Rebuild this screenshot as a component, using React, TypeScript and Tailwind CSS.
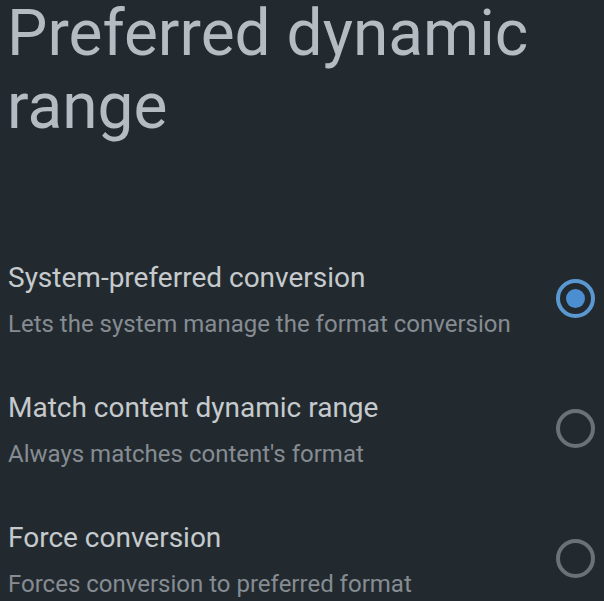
import React, { useState } from 'react';

const options = [
  { title: 'System-preferred conversion', desc: 'Lets the system manage the format conversion' },
  { title: 'Match content dynamic range', desc: "Always matches content's format" },
  { title: 'Force conversion', desc: 'Forces conversion to preferred format' },
];

function Radio({ checked }: { checked: boolean }) {
  return (
    <div
      className={`w-[39px] h-[39px] rounded-full border-[4px] flex items-center justify-center shrink-0 ${
        checked ? 'border-[#5a98d2]' : 'border-[#6b7177]'
      }`}
    >
      {checked && <div className="w-[19px] h-[19px] rounded-full bg-[#4b8fd2]" />}
    </div>
  );
}

export default function App() {
  const [selected, setSelected] = useState(0);

  return (
    <div className="w-[604px] h-[601px] bg-[#222a30] overflow-hidden font-['Roboto',sans-serif]">
      <h1 className="pl-[7px] -mt-[3px] text-[64px] leading-[73px] text-[#b4bbc1]">
        Preferred dynamic
        <br />
        range
      </h1>

      <div className="mt-[117px] flex flex-col gap-[50px]">
        {options.map((o, i) => (
          <div
            key={o.title}
            onClick={() => setSelected(i)}
            className="flex items-center justify-between pl-[8px] pr-[9px] cursor-pointer"
          >
            <div className="flex flex-col">
              <span className="text-[28px] leading-[36px] text-[#c6cacd]">{o.title}</span>
              <span className="mt-[12px] text-[24px] leading-[32px] text-[#868c92]">{o.desc}</span>
            </div>
            <div className="mb-[4px]">
              <Radio checked={selected === i} />
            </div>
          </div>
        ))}
      </div>
    </div>
  );
}
